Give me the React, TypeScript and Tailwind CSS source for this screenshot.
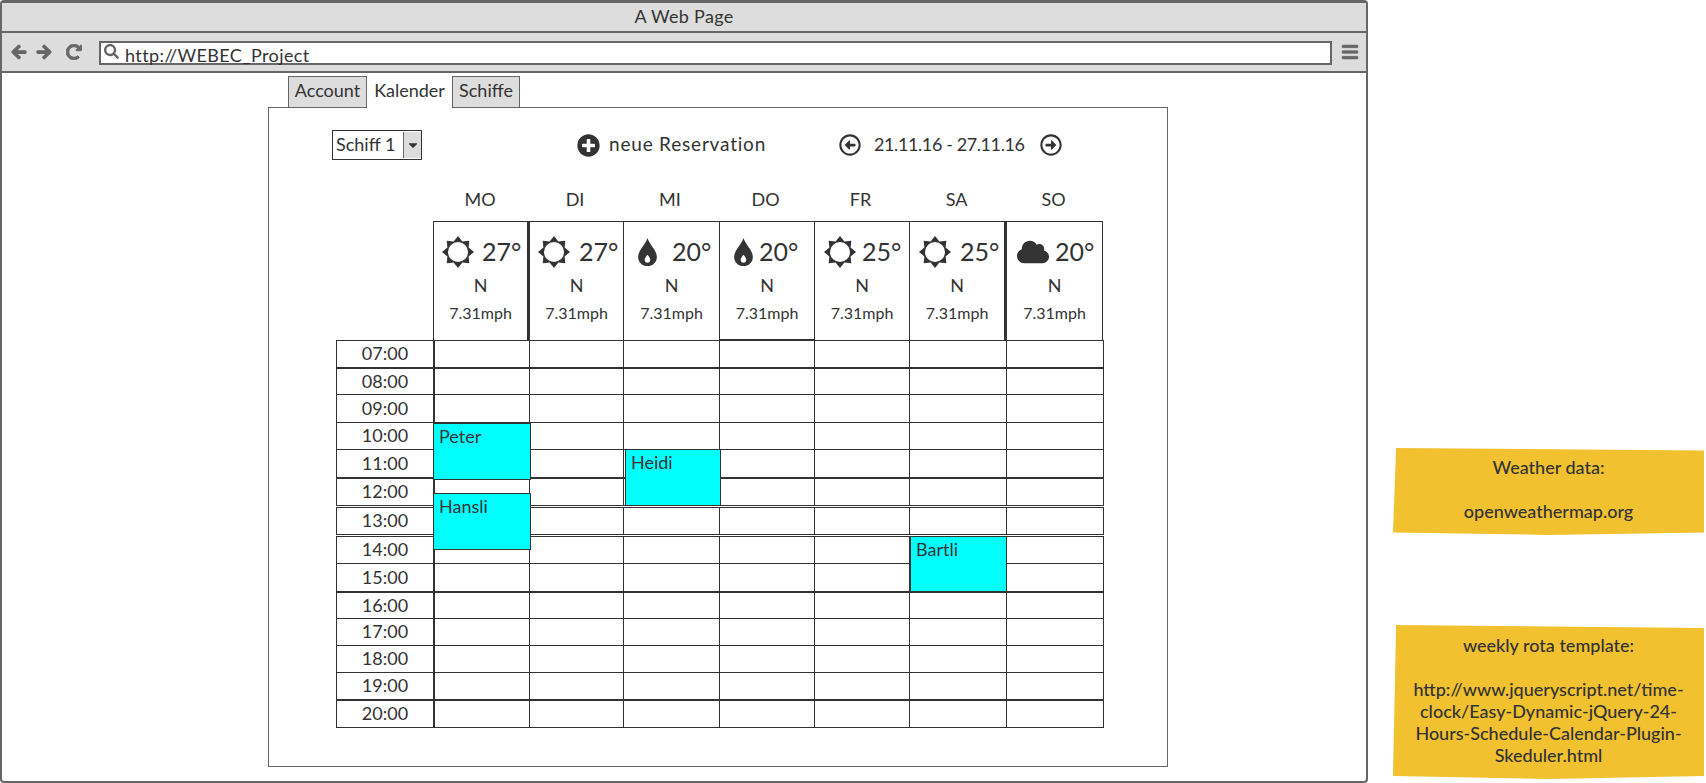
import React from "react";
import {
  FaArrowLeft,
  FaArrowRight,
  FaBars,
  FaCaretDown,
  FaCloud,
  FaPlusCircle,
  FaRedoAlt,
  FaRegArrowAltCircleLeft,
  FaRegArrowAltCircleRight,
  FaSearch,
} from "react-icons/fa";

const Drop = () => (
  <svg viewBox="0 0 20 30" className="h-[28px] w-[19px] fill-[#333]">
    <path
      fillRule="evenodd"
      d="M10 0C12 7 20 13 20 20.500C20 26 15.500 30 10 30S0 26 0 20.500C0 13 8 7 10 0ZM10 18C8 20.500 7 22 7 23.500C7 25.200 8.300 26.500 10 26.500S13 25.200 13 23.500C13 22 12 20.500 10 18Z"
    />
  </svg>
);

// eight-pointed star behind a white disc
const sunPoints = Array.from({ length: 16 }, (_, i) => {
  const r = i % 2 === 0 ? 16 : 11.5;
  const a = (i * Math.PI) / 8 - Math.PI / 2;
  return `${16 + r * Math.cos(a)},${16 + r * Math.sin(a)}`;
}).join(" ");

const Sun = () => (
  <svg viewBox="0 0 32 32" className="h-[32px] w-[32px] shrink-0">
    <polygon points={sunPoints} fill="#333" />
    <circle cx="16" cy="16" r="10" fill="#fff" />
  </svg>
);

const days = ["MO", "DI", "MI", "DO", "FR", "SA", "SO"];

// column classes are shared by the header, weather strip and rows
const columns = "grid-cols-[96px_96px_94px_96px_95px_95px_97px_97px]";

const weather = [
  { icon: "sun", temp: "27°", cell: "border-r-2", gap: "gap-[8px]", pad: "pl-[8px]" },
  { icon: "sun", temp: "27°", cell: "", gap: "gap-[9px]", pad: "pl-[8px]" },
  { icon: "drop", temp: "20°", cell: "", gap: "gap-[15px]", pad: "pl-[14px]" },
  { icon: "drop", temp: "20°", cell: "border-b-2", gap: "gap-[6px]", pad: "pl-[14px]" },
  { icon: "sun", temp: "25°", cell: "", gap: "gap-[6px]", pad: "pl-[9px]" },
  { icon: "sun", temp: "25°", cell: "border-r-2", gap: "gap-[9px]", pad: "pl-[9px]" },
  { icon: "cloud", temp: "20°", cell: "", gap: "gap-[6px]", pad: "pl-[10px]" },
];

const hours = [
  { label: "07:00", row: "h-[28px]" },
  { label: "08:00", row: "h-[28px] -mt-px border-t-2" },
  { label: "09:00", row: "h-[29px] -mt-px" },
  { label: "10:00", row: "h-[28px] -mt-px" },
  { label: "11:00", row: "h-[29px] -mt-px" },
  { label: "12:00", row: "h-[29px] -mt-px border-t-2" },
  { label: "13:00", row: "h-[28px] mt-px" },
  { label: "14:00", row: "h-[28px] mt-px" },
  { label: "15:00", row: "h-[29px] -mt-px" },
  { label: "16:00", row: "h-[28px] -mt-px border-t-2" },
  { label: "17:00", row: "h-[28px] -mt-px" },
  { label: "18:00", row: "h-[28px] -mt-px" },
  { label: "19:00", row: "h-[28px] -mt-px" },
  { label: "20:00", row: "h-[29px] -mt-px border-t-2" },
];

const Reservation = ({ name, className }: { name: string; className: string }) => (
  <div className={`absolute bg-[#00ffff] border border-[#333] pl-[5px] text-[18px] leading-[24px] ${className}`}>
    {name}
  </div>
);

const WeatherIcon = ({ icon }: { icon: string }) => {
  if (icon === "sun") return <Sun />;
  if (icon === "drop") return <Drop />;
  return <FaCloud className="h-[32px] w-[32px] shrink-0" />;
};

export default function App() {
  return (
    <div className="flex h-[783px] w-[1706px] overflow-hidden bg-white font-[Lato,sans-serif] text-[#333]">
      {/* browser window */}
      <div className="flex h-[783px] w-[1368px] shrink-0 flex-col rounded-[4px] border-2 border-t-[3px] border-[#666]">
        <div className="flex h-[30px] shrink-0 items-center justify-center border-b-2 border-[#666] bg-[#ddd] pb-[2px] text-[18px] tracking-[0.3px]">
          A Web Page
        </div>
        <div className="flex h-[40px] shrink-0 items-center border-b-2 border-[#666] bg-[#ddd] pl-[9px] pr-[6px] text-[#666]">
          <FaArrowLeft strokeWidth={40} className="h-[16px] w-[16px]" />
          <FaArrowRight strokeWidth={40} className="ml-[9px] h-[16px] w-[16px]" />
          <FaRedoAlt strokeWidth={30} className="ml-[14px] h-[16px] w-[16px]" />
          <div className="ml-[17px] flex h-[24px] w-[1233px] translate-y-px items-center border-2 border-[#666] bg-white pl-[3px] text-[18px] tracking-[0.4px] text-[#333]">
            <FaSearch className="h-[15px] w-[15px] -translate-y-[2px] text-[#666]" />
            <span className="ml-[6px] translate-y-[2px]">http://WEBEC_Project</span>
          </div>
          <FaBars strokeWidth={20} className="ml-[9px] h-[18px] w-[18px]" />
        </div>

        <div className="ml-[266px] mt-[3px] flex w-[900px] flex-col">
          <div className="relative z-10 -mb-px ml-[20px] flex h-[32px] text-[18px]">
            <div className="flex w-[79px] items-center justify-center border border-[#666] bg-[#ddd] pb-[3px]">Account</div>
            <div className="flex w-[85px] items-center justify-center border-b border-white bg-white pb-[3px]">Kalender</div>
            <div className="flex w-[68px] items-center justify-center border border-[#666] bg-[#ddd] pb-[3px]">Schiffe</div>
          </div>

          <div className="h-[660px] border border-[#666] pl-[63px] pt-[22px]">
            {/* toolbar */}
            <div className="flex h-[30px] items-center text-[18px]">
              <div className="flex h-[30px] w-[90px] items-center border border-[#333] pb-[2px] pl-[3px]">
                <span className="flex-1">Schiff 1</span>
                <div className="flex h-full w-[18px] translate-y-px items-center justify-center border-l border-[#666] bg-[#ddd]">
                  <FaCaretDown className="h-[14px] w-[14px]" />
                </div>
              </div>
              <FaPlusCircle className="ml-[155px] h-[23px] w-[23px]" />
              <span className="ml-[9px] w-[230px] pb-[2px] text-[19px] tracking-[0.8px]">neue Reservation</span>
              <FaRegArrowAltCircleLeft className="h-[22px] w-[22px]" />
              <span className="ml-[13px] w-[166px] pb-[2px] tracking-[-0.4px]">21.11.16 - 27.11.16</span>
              <FaRegArrowAltCircleRight className="h-[22px] w-[22px]" />
            </div>

            <div className="ml-[4px] mt-[18px] w-[768px]">
              <div className={`grid h-[43px] items-center text-center text-[18px] ${columns}`}>
                <div />
                {days.map((d) => (
                  <div key={d}>{d}</div>
                ))}
              </div>

              <div className={`grid h-[120px] pl-px ${columns}`}>
                <div />
                {weather.map((w, i) => (
                  <div
                    key={i}
                    className={`flex flex-col items-center border-y border-l border-[#333] last:border-r ${w.cell}`}
                  >
                    <div className={`mt-[14px] flex h-[32px] w-full items-center text-[25px] ${w.gap} ${w.pad}`}>
                      <WeatherIcon icon={w.icon} />
                      <span>{w.temp}</span>
                    </div>
                    <span className="mt-[4px] text-[18px] leading-[26px]">N</span>
                    <span className="mt-[3px] text-[16px] leading-[24px]">7.31mph</span>
                  </div>
                ))}
              </div>

              <div className="relative -mt-px">
                {hours.map((h) => (
                  <div key={h.label} className={`grid grid-rows-[minmax(0,1fr)] border border-[#333] ${columns} ${h.row}`}>
                    <div className="flex items-center justify-center pb-[2px] text-[18px] leading-[20px]">{h.label}</div>
                    {days.map((d, i) => (
                      <div key={d} className={`border-l border-[#333] ${i === 0 ? "border-l-2" : ""}`} />
                    ))}
                  </div>
                ))}
                <Reservation name="Peter" className="left-[97px] top-[83px] h-[57px] w-[98px]" />
                <Reservation name="Hansli" className="left-[97px] top-[153px] h-[57px] w-[98px]" />
                <Reservation name="Heidi" className="left-[289px] top-[109px] h-[57px] w-[96px]" />
                <Reservation name="Bartli" className="left-[574px] top-[196px] h-[56px] w-[97px]" />
              </div>
            </div>
          </div>
        </div>
      </div>

      {/* sticky notes */}
      <div className="flex flex-1 flex-col pl-[25px] pr-[2px] pt-[448px] text-center text-[18px] font-medium leading-[22px]">
        <div className="h-[87px] bg-[#f1c12f] pt-[8px] [clip-path:polygon(1%_0,100%_3%,100%_97%,50%_100%,0_97%)]">
          <p>Weather data:</p>
          <p className="mt-[22px]">openweathermap.org</p>
        </div>
        <div className="mt-[90px] h-[154px] bg-[#f1c12f] px-[12px] pt-[9px] [clip-path:polygon(1%_0,100%_2%,100%_98%,50%_100%,0_98%)]">
          <p>weekly rota template:</p>
          <p className="mt-[22px] break-words">
            http://www.jqueryscript.net/time-clock/Easy-Dynamic-jQuery-24-Hours-Schedule-Calendar-Plugin-Skeduler.html
          </p>
        </div>
      </div>
    </div>
  );
}
